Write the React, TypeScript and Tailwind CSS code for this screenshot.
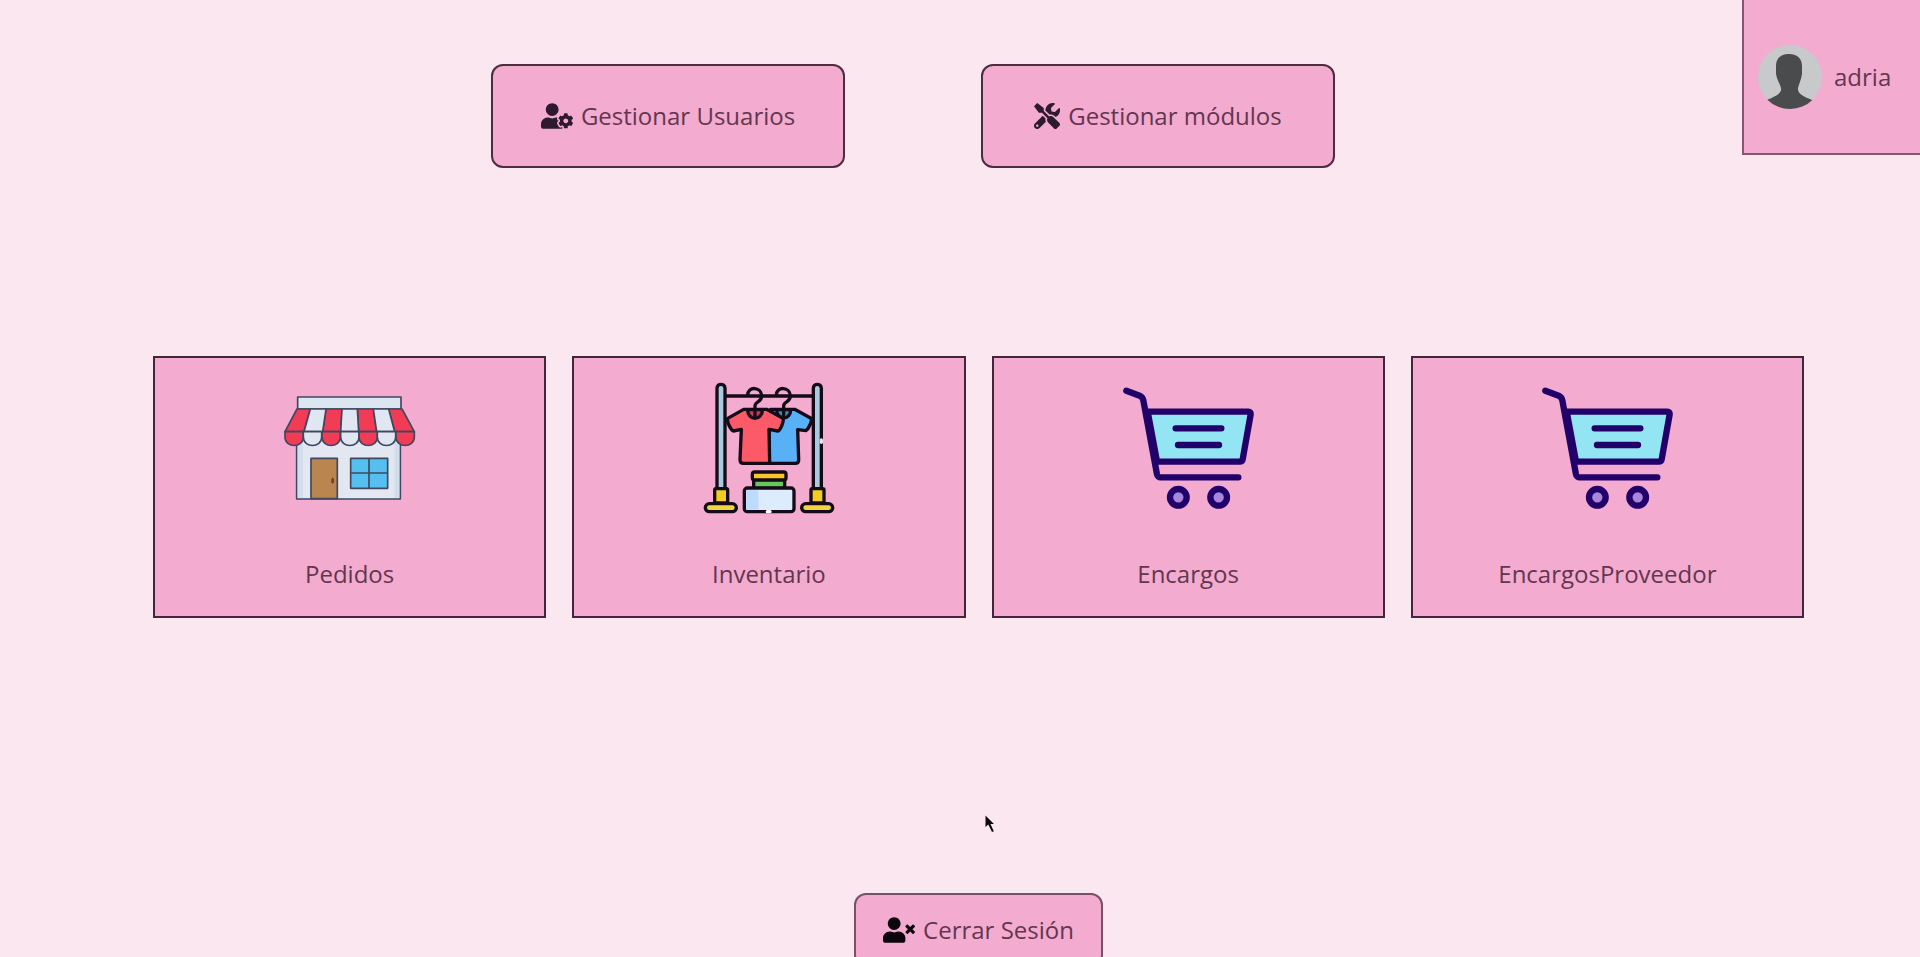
import { FaTools, FaUserCog, FaUserTimes } from "react-icons/fa";
import type { ReactNode } from "react";

function StoreIcon() {
  const reds = ["M112 116 L152 116 L133 184 L76 184 Z", "M199 116 L247 116 L243 184 L189 184 Z", "M293 116 L341 116 L351 184 L297 184 Z", "M387 116 L427 116 L464 184 L405 184 Z"];
  const whites = ["M152 116 L199 116 L189 184 L133 184 Z", "M247 116 L293 116 L297 184 L243 184 Z", "M341 116 L387 116 L405 184 L351 184 Z"];
  const scallops = [76, 131, 187, 243, 298, 353, 409];
  return (
    <svg viewBox="76 38 390 390" className="size-[130px] overflow-visible" aria-hidden="true">
      <g stroke="#3f4860" strokeWidth="5" strokeLinejoin="round">
        <rect x="111" y="190" width="311" height="196" fill="#e3e7f2" />
        <path d="M114 200 h16 v183 h-16 Z" fill="#d3deec" stroke="none" />
        <path d="M404 200 h15 v183 h-15 Z" fill="#d3deec" stroke="none" />
        <rect x="114" y="80" width="310" height="36" fill="#dce6f0" />
        {reds.map((d) => <path key={d} d={d} fill="#f23b55" />)}
        {whites.map((d) => <path key={d} d={d} fill="#e1e7f1" />)}
        {scallops.map((x, i) => (
          <path
            key={x}
            d={`M${x} 184 v16 c0 34 55 34 55 0 v-16 Z`}
            fill={i % 2 === 0 ? "#f23b55" : "#e1e7f1"}
          />
        ))}
        <rect x="154" y="264" width="79" height="121" fill="#bb8550" />
        <ellipse cx="219" cy="331" rx="3" ry="8" fill="#72422f" stroke="#72422f" strokeWidth="3" />
        <rect x="273" y="264" width="111" height="90" fill="#55bff0" />
        <path d="M328 264 V354 M273 308 H384" fill="none" />
      </g>
    </svg>
  );
}

function ClothesRackIcon() {
  return (
    <svg viewBox="72 38 390 390" className="size-[130px] overflow-visible" aria-hidden="true">
      <g stroke="#150b18" strokeWidth="10" strokeLinejoin="round" strokeLinecap="round">
        <path d="M136 77 H398" fill="none" />
        <path d="M111 354 V54 C111 38 135 38 135 54 V354" fill="#a9cbe0" />
        <path d="M400 354 V54 C400 38 424 38 424 54 V354" fill="#a9cbe0" />
        <path d="M424 209 V216" stroke="#f4dce9" />
        <path d="M272 117 L344 117 L393 144 C397 151 386 176 378 181 L353 178 L356 269 C356 275 352 279 346 279 L268 279 L267 150 Z" fill="#58b0f7" />
        <path d="M290 118 C290 151 332 151 332 118 Z" fill="#348eae" />
        <path d="M191 117 L260 117 L309 144 C313 151 302 178 294 182 L267 177 L269 279 L190 279 C183 279 180 275 180 269 L184 177 L160 182 C151 178 140 153 143 144 Z" fill="#fc5a68" />
        <path d="M203 118 C203 153 247 153 247 118 Z" fill="#c53e50" />
        <path d="M203 75 C203 46 245 49 245 77 C245 97 225 92 225 107 V137" fill="none" />
        <path d="M289 75 C289 46 331 49 331 77 C331 97 311 92 311 107 V135" fill="none" />
        <rect x="221" y="327" width="93" height="27" rx="6" fill="#68c65f" />
        <rect x="217" y="305" width="101" height="24" rx="7" fill="#f7c62c" />
        <rect x="193" y="353" width="149" height="71" rx="9" fill="#dcecfc" />
        <path d="M199 359 H235 V418 H199 Z" fill="#bcdcfb" stroke="none" />
        <path d="M262 424 H270" stroke="#ffffff" />
        <rect x="104" y="355" width="39" height="43" rx="4" fill="#f2cd21" />
        <rect x="393" y="355" width="39" height="43" rx="4" fill="#f2cd21" />
        <rect x="76" y="400" width="93" height="24" rx="12" fill="#f2d640" />
        <rect x="365" y="400" width="93" height="24" rx="12" fill="#f2d640" />
      </g>
    </svg>
  );
}

function CartIcon() {
  return (
    <svg viewBox="68 38 390 390" className="size-[130px] overflow-visible" aria-hidden="true">
      <g stroke="#22006a" strokeWidth="19" strokeLinejoin="round" strokeLinecap="round" fill="none">
        <path d="M142 124 H444 Q452 124 451 132 L427 267 Q426 274 418 274 H170 Z" fill="#94e5f3" />
        <path d="M78 61 L118 76 Q127 80 129 90 L170 312 Q172 321 182 321 H414" />
        <path d="M226 174 H363 M233 224 H356" />
        <circle cx="234" cy="381" r="25" fill="#a886dc" />
        <circle cx="355" cy="381" r="25" fill="#a886dc" />
      </g>
    </svg>
  );
}

function Avatar() {
  return (
    <svg viewBox="0 0 64 64" className="size-16 shrink-0" role="img" aria-label="adria">
      <clipPath id="avatar-clip">
        <circle cx="32" cy="32" r="32" />
      </clipPath>
      <g clipPath="url(#avatar-clip)">
        <rect width="64" height="64" fill="#c8c9cb" />
        <path
          d="M31 9 C40 9 44 14 44 21 L44 29 C43 35 41 39 40 43 C39 49 46 52 54 55 L60 58 V64 H4 V58 L9 55 C17 51 24 49 23 43 C22 39 19 35 18 29 L18 21 C18 14 22 9 31 9 Z"
          fill="#494b4d"
        />
      </g>
    </svg>
  );
}

const modules: { name: string; icon: ReactNode }[] = [
  { name: "Pedidos", icon: <StoreIcon /> },
  { name: "Inventario", icon: <ClothesRackIcon /> },
  { name: "Encargos", icon: <CartIcon /> },
  { name: "EncargosProveedor", icon: <CartIcon /> },
];

export default function App() {
  return (
    <div className="relative min-h-screen bg-[#fbe7f0] font-['Open_Sans','Noto_Sans',sans-serif] text-2xl leading-9 text-[#633650]">
      <header className="flex items-start">
        <nav className="flex flex-1 justify-center gap-[136px] pt-16 pl-[84px]">
          <button className="flex h-[104px] w-[354px] items-center justify-center gap-2 rounded-xl border-2 border-[#4c2c3f] bg-[#f3abcf]">
            <FaUserCog className="h-[26px] w-8 text-[#2d1a30]" />
            Gestionar Usuarios
          </button>
          <button className="flex h-[104px] w-[354px] items-center justify-center gap-2 rounded-xl border-2 border-[#4c2c3f] bg-[#f3abcf]">
            <FaTools className="size-[26px] text-[#2d1a30]" />
            Gestionar módulos
          </button>
        </nav>
        <div className="flex h-[155px] w-[178px] items-center gap-3 border-b-2 border-l-2 border-[#85566f] bg-[#f3abcf] pl-3.5">
          <Avatar />
          <span>adria</span>
        </div>
      </header>
      <main className="flex flex-col items-center pt-[188px] pr-[116px] pl-[153px]">
        <div className="grid w-full grid-cols-4 gap-[26px]">
          {modules.map((module) => (
            <button
              key={module.name}
              className="flex h-[262px] flex-col items-center justify-between border-2 border-[#43263a] bg-[#f3abcf] pt-[25px] pb-6"
            >
              {module.icon}
              {module.name}
            </button>
          ))}
        </div>
        <button className="mt-[275px] flex h-[74px] w-[249px] items-center justify-center gap-2 rounded-xl border-2 border-[#795066] bg-[#f3abcf]">
          <FaUserTimes className="h-[26px] w-8 text-[#0d060d]" />
          Cerrar Sesión
        </button>
      </main>
      <svg viewBox="0 0 11 18" className="absolute top-[815px] left-[985px] h-[18px] w-[11px]" aria-hidden="true">
        <path d="M0.5 0.5 V12 L3.3 9.5 L7 17 L8.8 16.2 L5.5 9 H9 Z" fill="#0b0b0d" />
      </svg>
    </div>
  );
}
